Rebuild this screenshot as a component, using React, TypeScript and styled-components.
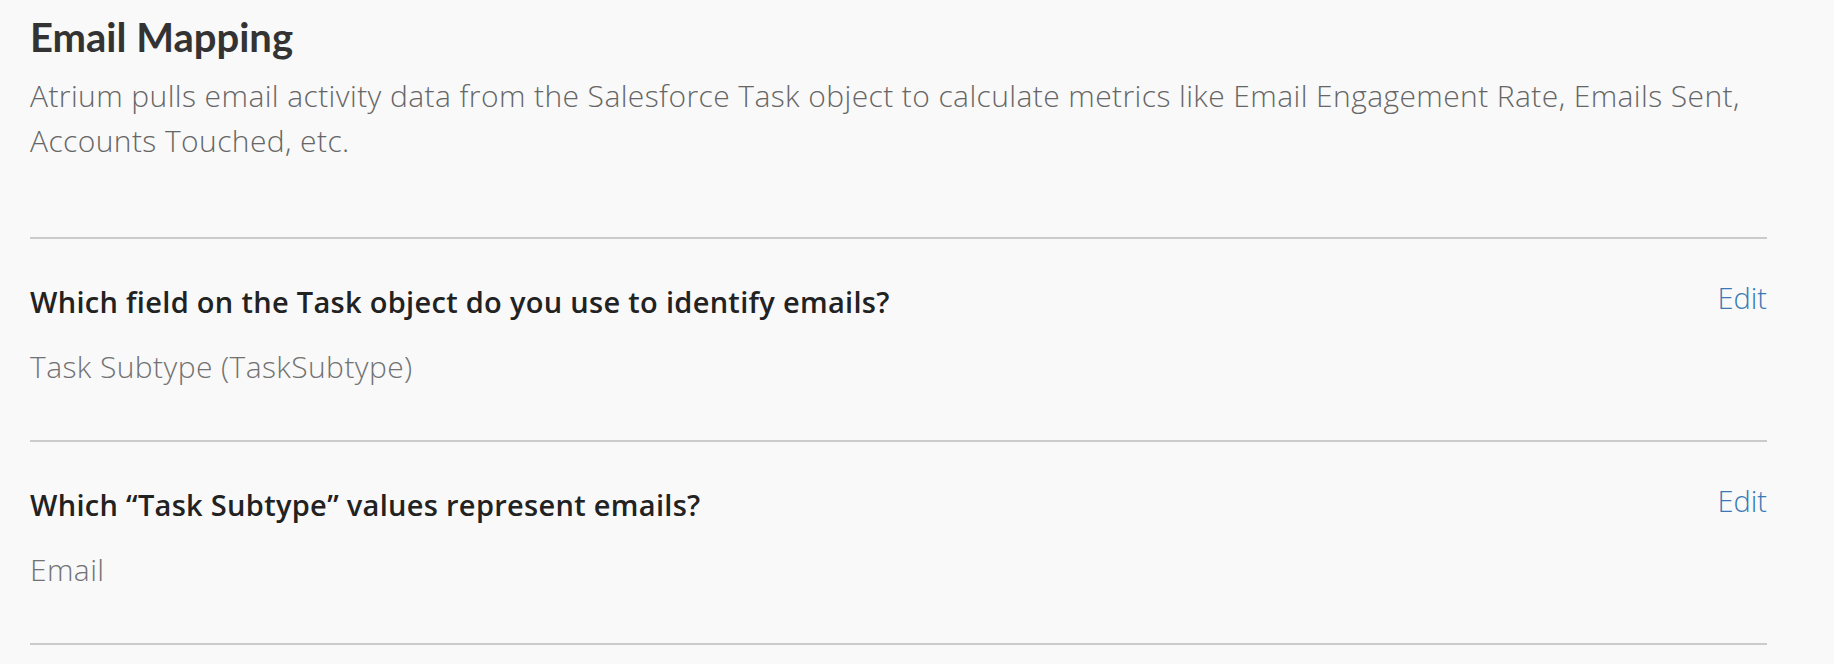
import styled, { createGlobalStyle } from 'styled-components'

const Global = createGlobalStyle`
  html, body {
    margin: 0;
    padding: 0;
    background: #f9f9f9;
  }
  body {
    font-family: "Open Sans", Lato, "Liberation Sans", sans-serif;
    -webkit-font-smoothing: antialiased;
  }
`

const Page = styled.main`
  width: 1737px;
  padding: 14px 0 0 30px;
`

const Title = styled.h1`
  margin: 0;
  color: #333;
  font-family: Lato, "Liberation Sans", sans-serif;
  font-size: 40px;
  font-weight: 700;
  line-height: 46px;
`

const Intro = styled.p`
  margin: 13px 0 0;
  color: #666;
  font-size: 30px;
  font-weight: 300;
  line-height: 45px;
  letter-spacing: 0.4px;
`

const List = styled.div`
  margin-top: 74px;
  border-top: 2px solid #cbcbcb;
`

const Item = styled.section`
  padding: 43px 0 53px;
  border-bottom: 2px solid #cbcbcb;
`

const Head = styled.div`
  display: flex;
  align-items: flex-start;
  justify-content: space-between;
  gap: 24px;
`

const Question = styled.h2`
  margin: 0;
  color: #222;
  font-size: 29px;
  font-weight: 600;
  line-height: 40px;
  letter-spacing: 0.3px;
`

const EditLink = styled.a`
  color: #3a79b5;
  font-size: 29px;
  font-weight: 300;
  line-height: 32px;
  text-decoration: none;
  cursor: pointer;

  &:hover {
    text-decoration: underline;
  }
`

const Answer = styled.div`
  margin-top: 25px;
  color: #727272;
  font-size: 30px;
  font-weight: 300;
  line-height: 40px;
  letter-spacing: 0.4px;
`

const mappings = [
  {
    question: 'Which field on the Task object do you use to identify emails?',
    answer: 'Task Subtype (TaskSubtype)',
  },
  {
    question: 'Which \u201cTask Subtype\u201d values represent emails?',
    answer: 'Email',
  },
]

export default function App() {
  return (
    <>
      <Global />
      <Page>
        <Title>Email Mapping</Title>
        <Intro>
          Atrium pulls email activity data from the Salesforce Task object to calculate metrics like
          Email Engagement Rate, Emails Sent, Accounts Touched, etc.
        </Intro>
        <List>
          {mappings.map((m) => (
            <Item key={m.question}>
              <Head>
                <Question>{m.question}</Question>
                <EditLink>Edit</EditLink>
              </Head>
              <Answer>{m.answer}</Answer>
            </Item>
          ))}
        </List>
      </Page>
    </>
  )
}
